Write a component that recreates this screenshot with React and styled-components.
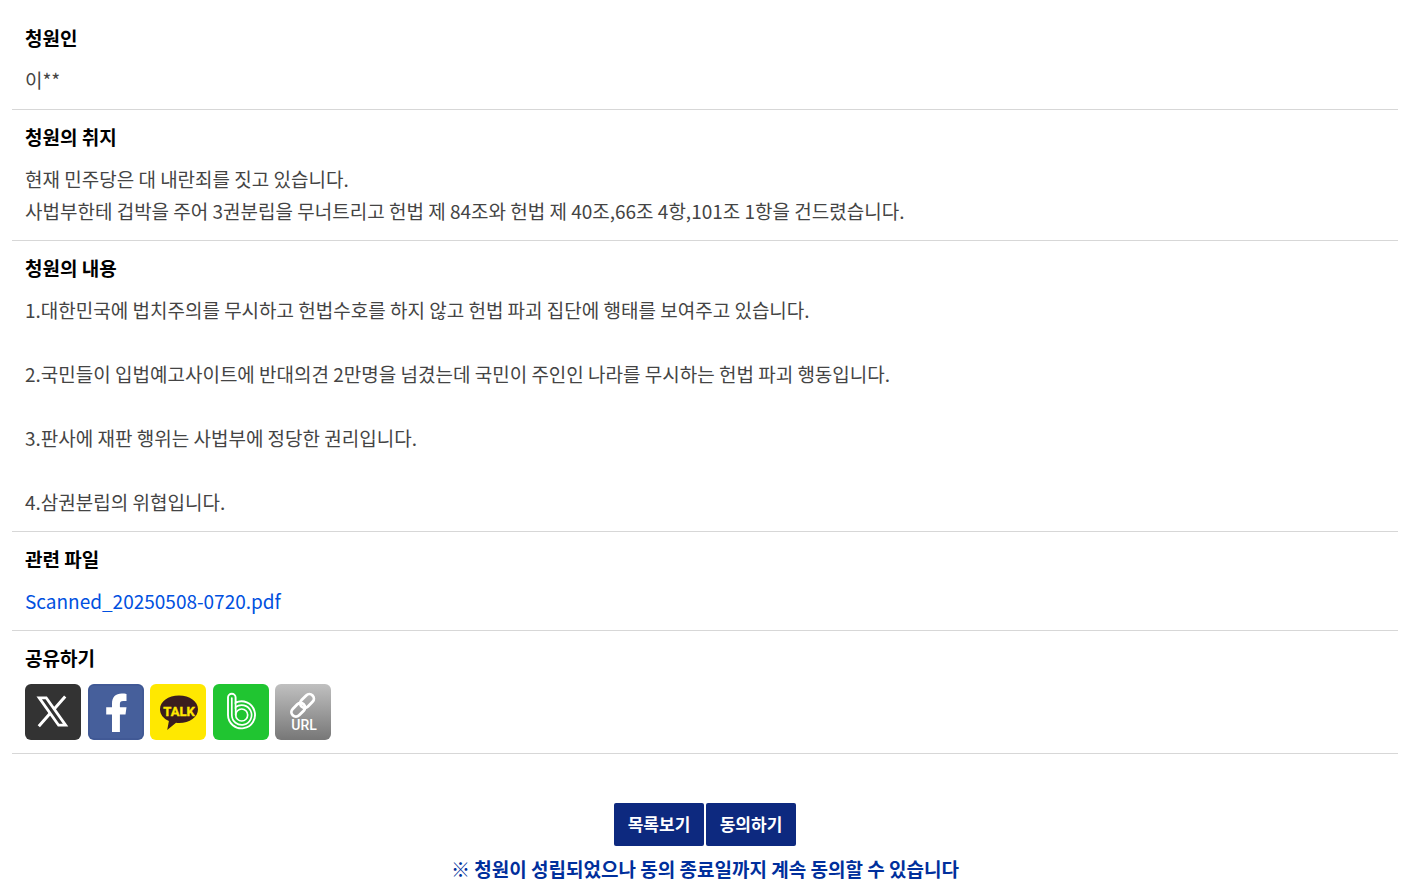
import React from "react";
import styled, { createGlobalStyle } from "styled-components";

const GlobalStyle = createGlobalStyle`
  * { box-sizing: border-box; }
  body {
    margin: 0;
    background: #fff;
    color: #444;
    font-family: "Noto Sans CJK KR", sans-serif;
    font-size: 19px;
    line-height: 32px;
  }
`;

const Page = styled.main`
  padding: 11px 8px 0 12px;
`;

const Section = styled.section`
  padding: 12px 13px 13px;
  border-bottom: 1px solid #d7d7d7;
`;

const Title = styled.h2`
  margin: 0 0 11px;
  color: #000;
  font-size: 19px;
  font-weight: 700;
  line-height: 30px;
`;

const Text = styled.p`
  margin: 0;
  white-space: pre-line;
`;

const FileLink = styled.a`
  color: #0050e0;
  text-decoration: none;
`;

const ShareList = styled.ul`
  display: flex;
  justify-content: space-between;
  width: 306px;
  margin: 0;
  padding: 0;
  list-style: none;
`;

const ShareButton = styled.button`
  display: block;
  width: 56px;
  height: 56px;
  padding: 0;
  border: 0;
  border-radius: 6px;
  overflow: hidden;
  background: ${(p) => p.$fill};
  cursor: pointer;

  svg { display: block; }
`;

const Footer = styled.footer`
  display: flex;
  flex-direction: column;
  align-items: center;
  padding-top: 49px;
`;

const Actions = styled.div`
  display: flex;
  gap: 2px;
`;

const ActionButton = styled.button`
  width: 90px;
  height: 43px;
  padding: 0 0 2px;
  border: 0;
  border-radius: 2px;
  background: #0d297f;
  color: #fff;
  font-family: inherit;
  font-size: 17px;
  font-weight: 700;
  cursor: pointer;
`;

const Notice = styled.p`
  margin: 7px 0 0;
  color: #002f9c;
  font-weight: 700;
  line-height: 32px;
`;

const iconProps = { width: 56, height: 56, viewBox: "0 0 56 56", "aria-hidden": true };

const XIcon = () => (
  <svg {...iconProps}>
    <path d="M14.200 13.800h7l19.400 27.400h-7z" fill="none" stroke="#fff" strokeWidth="2.800" />
    <path d="M40.200 12.500 29 25.200M25 29.500 13.800 42.300" stroke="#fff" strokeWidth="3" fill="none" />
  </svg>
);

const FacebookIcon = () => (
  <svg {...iconProps}>
    <rect x="1" y="1" width="54" height="54" rx="5" fill="none" stroke="#3c5590" strokeWidth="1" />
    <path
      d="M24 48V30.500h-5.800V23.300H24v-3.800c0-6.500 3.800-10 9.700-10 1.900 0 3.500.1 4.800.4v7h-3.300c-2.500 0-3.300 1.200-3.300 3.200v3.200h6.600l-1 7.200h-5.600V48z"
      fill="#fff"
    />
  </svg>
);

const TalkIcon = () => (
  <svg {...iconProps}>
    <path
      d="M29 11.500c10.800 0 19 5.800 19 13.700S39.800 39 29 39c-1 0-2-.1-3-.2L17.200 46l1.700-9C13.400 34.600 10 30.300 10 25.200c0-7.900 8.200-13.700 19-13.700z"
      fill="#3b1d1e"
    />
    <text
      x="29"
      y="32"
      textAnchor="middle"
      fontFamily="Liberation Sans Narrow, Roboto, sans-serif"
      fontWeight="700"
      fontSize="13"
      fill="#ffe800"
      stroke="#ffe800"
      strokeWidth="0.4"
    >
      TALK
    </text>
  </svg>
);

const BandIcon = () => (
  <svg {...iconProps} fill="none" stroke="#fff" strokeLinecap="round">
    <path d="M15 31V13.500a3.800 3.800 0 0 1 7.600 0v5.200A13.500 13.500 0 1 1 15 31z" strokeWidth="1.900" />
    <path d="M18.800 14v17a9.900 9.900 0 1 0 3.800-7.800v-4.500" strokeWidth="1.700" />
    <circle cx="28.700" cy="31" r="6" strokeWidth="1.700" />
    <path d="M22.700 31v-8" strokeWidth="1.700" />
  </svg>
);

const UrlIcon = () => (
  <svg {...iconProps}>
    <g fill="none" stroke="#fff" strokeWidth="2.800" transform="rotate(-45 28 21)">
      <rect x="13.500" y="16.500" width="15.500" height="9" rx="4.500" />
      <rect x="26" y="16.500" width="15.500" height="9" rx="4.500" />
    </g>
    <text
      x="29"
      y="46"
      textAnchor="middle"
      fontFamily="Roboto, sans-serif"
      fontWeight="500"
      fontSize="14"
      fill="#fff"
    >
      URL
    </text>
  </svg>
);

const shares = [
  { label: "X", fill: "#333", Icon: XIcon },
  { label: "페이스북", fill: "#465f9b", Icon: FacebookIcon },
  { label: "카카오톡", fill: "#ffe800", Icon: TalkIcon },
  { label: "밴드", fill: "#20c531", Icon: BandIcon },
  { label: "URL 복사", fill: "linear-gradient(#c0c0c0, #777)", Icon: UrlIcon },
];

const purpose = `현재 민주당은 대 내란죄를 짓고 있습니다.
사법부한테 겁박을 주어 3권분립을 무너트리고 헌법 제 84조와 헌법 제 40조,66조 4항,101조 1항을 건드렸습니다.`;

const content = `1.대한민국에 법치주의를 무시하고 헌법수호를 하지 않고 헌법 파괴 집단에 행태를 보여주고 있습니다.

2.국민들이 입법예고사이트에 반대의견 2만명을 넘겼는데 국민이 주인인 나라를 무시하는 헌법 파괴 행동입니다.

3.판사에 재판 행위는 사법부에 정당한 권리입니다.

4.삼권분립의 위협입니다.`;

export default function App() {
  return (
    <>
      <GlobalStyle />
      <Page>
        <Section>
          <Title>청원인</Title>
          <Text>이**</Text>
        </Section>
        <Section>
          <Title>청원의 취지</Title>
          <Text>{purpose}</Text>
        </Section>
        <Section>
          <Title>청원의 내용</Title>
          <Text>{content}</Text>
        </Section>
        <Section>
          <Title>관련 파일</Title>
          <Text>
            <FileLink href="#file">Scanned_20250508-0720.pdf</FileLink>
          </Text>
        </Section>
        <Section>
          <Title>공유하기</Title>
          <ShareList>
            {shares.map(({ label, fill, Icon }) => (
              <li key={label}>
                <ShareButton type="button" aria-label={label} $fill={fill}>
                  <Icon />
                </ShareButton>
              </li>
            ))}
          </ShareList>
        </Section>
        <Footer>
          <Actions>
            <ActionButton type="button">목록보기</ActionButton>
            <ActionButton type="button">동의하기</ActionButton>
          </Actions>
          <Notice>※ 청원이 성립되었으나 동의 종료일까지 계속 동의할 수 있습니다</Notice>
        </Footer>
      </Page>
    </>
  );
}
